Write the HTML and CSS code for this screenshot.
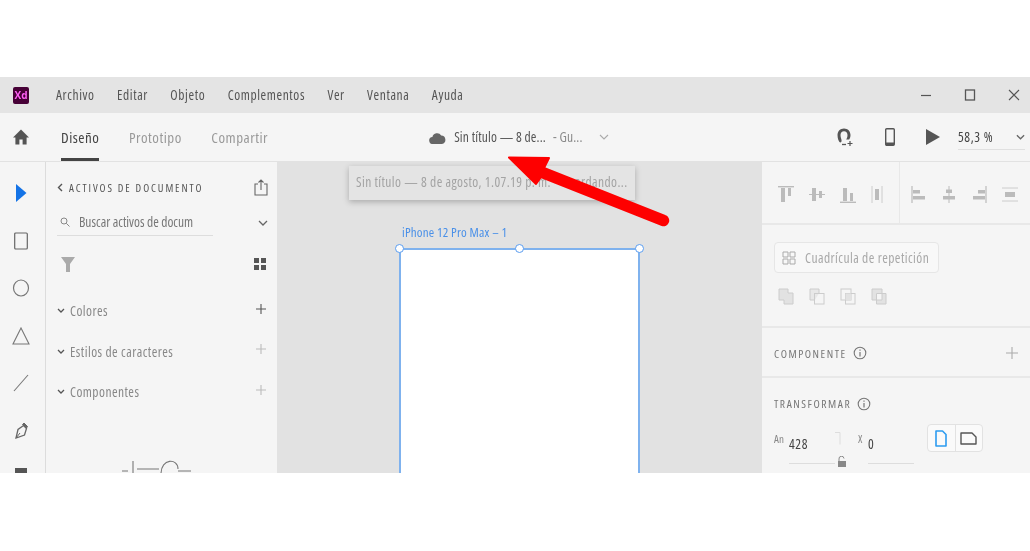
FILE: index.html
```html
<!DOCTYPE html>
<html lang="es">
<head>
<meta charset="utf-8">
<title>Adobe XD</title>
<link rel="stylesheet" href="styles.css">
</head>
<body>
<div class="app">
  <header class="titlebar">
    <div class="xd-logo">Xd</div>
    <nav class="menu">
      <span>Archivo</span><span>Editar</span><span>Objeto</span><span>Complementos</span><span>Ver</span><span>Ventana</span><span>Ayuda</span>
    </nav>
    <div class="win-controls">
      <svg width="14" height="14" viewBox="0 0 14 14"><path d="M2 7.500h10" stroke="#555" stroke-width="1.200"/></svg>
      <svg width="14" height="14" viewBox="0 0 14 14"><rect x="2.500" y="2" width="9" height="10" fill="none" stroke="#555" stroke-width="1.300"/></svg>
      <svg width="14" height="14" viewBox="0 0 14 14"><path d="M2 2l10 10M12 2L2 12" stroke="#555" stroke-width="1.100"/></svg>
    </div>
  </header>

  <div class="toolbar">
    <svg class="home" width="18" height="18" viewBox="0 0 18 18"><path d="M9 1.500L1 9.500h2.400V16.500h4V11.500h3.200v5h4V9.500H17z" fill="#555"/></svg>
    <div class="tabs">
      <span class="tab active">Diseño</span><span class="tab">Prototipo</span><span class="tab">Compartir</span>
    </div>
    <div class="doc-title">
      <svg width="17" height="13" viewBox="0 0 17 13"><path d="M4 13a3.500 3.500 0 0 1-.6-7A4.800 4.800 0 0 1 12.200 4.500 4.300 4.300 0 0 1 13 13z" fill="#666"/></svg>
      <span class="doc-name">Sin título — 8 de...</span>
      <span class="doc-state">- Gu...</span>
      <svg width="10" height="6" viewBox="0 0 10 6"><path d="M1 1l4 4 4-4" fill="none" stroke="#aaa" stroke-width="1.100"/></svg>
    </div>
    <div class="tool-actions">
      <svg width="18" height="20" viewBox="0 0 18 20"><path d="M8 4.200c-2.100 0-3.500 1.500-3.500 3.800 0 2.600 1.100 4.200 1.100 5.800 0 1.400-.9 1.800-1.500 1.700C2.700 14.500 1.500 11.500 1.500 8 1.500 4.300 4.200 1.500 8 1.500S14.500 4.300 14.500 8c0 1.800-.5 3.300-1.300 4.500h-3c.8-1.300 1.300-2.700 1.300-4.500 0-2.300-1.400-3.800-3.500-3.800z" fill="#555"/><path d="M6 17.500h4" stroke="#555" stroke-width="1.300"/><path d="M11.500 16.500h5M14 14v5" stroke="#555" stroke-width="1.200"/></svg>
      <svg width="12" height="20" viewBox="0 0 12 20"><rect x="1.700" y="1.700" width="8.600" height="16.600" rx="1" fill="none" stroke="#555" stroke-width="1.400"/><path d="M2 15.500h8v2.500H2z" fill="#555"/></svg>
      <svg width="14" height="16" viewBox="0 0 14 16"><path d="M0 0l14 8-14 8z" fill="#555"/></svg>
      <div class="zoom-field"><span>58,3 %</span>
        <svg width="9" height="6" viewBox="0 0 10 6"><path d="M1 1l4 4 4-4" fill="none" stroke="#666" stroke-width="1.400"/></svg>
      </div>
    </div>
  </div>

  <div class="workspace">
    <aside class="tool-rail">
      <svg width="14" height="18" viewBox="0 0 14 18"><path d="M2 0l10.500 9L2 18z" fill="#1473e6"/></svg>
      <svg width="14" height="18" viewBox="0 0 14 18"><rect x=".7" y="1" width="12.600" height="16" rx="1" fill="none" stroke="#666" stroke-width="1.200"/></svg>
      <svg width="18" height="18" viewBox="0 0 18 18"><ellipse cx="9" cy="9" rx="7.500" ry="8" fill="none" stroke="#777" stroke-width="1.200"/></svg>
      <svg width="18" height="18" viewBox="0 0 18 18"><path d="M9 1l8 16H1z" fill="none" stroke="#777" stroke-width="1.100"/></svg>
      <svg width="16" height="18" viewBox="0 0 16 18"><path d="M15 1L1 17" stroke="#777" stroke-width="1.100"/></svg>
      <svg width="16" height="18" viewBox="0 0 16 18"><path d="M10.500 3.500l3 3-2 6.500-8.500 3 2-8.500z" fill="none" stroke="#666" stroke-width="1.300"/><path d="M11 1l3.500 3.500-1 1.500L9.500 2.500zM3 16l4-5" fill="#666" stroke="#666"/></svg>
      <svg class="rail-cut" width="12" height="6" viewBox="0 0 12 6"><rect width="12" height="6" fill="#555"/></svg>
    </aside>

    <section class="assets">
      <div class="assets-head">
        <h2><svg width="6" height="9" viewBox="0 0 6 9"><path d="M5 1L1.500 4.500 5 8" fill="none" stroke="#555" stroke-width="1.400"/></svg>ACTIVOS DE DOCUMENTO</h2>
        <svg width="14" height="17" viewBox="0 0 14 17"><path d="M4 5H1v11h12V5h-3M7 11V1M4.500 3.500L7 1l2.500 2.500" fill="none" stroke="#666" stroke-width="1.100"/></svg>
      </div>
      <div class="assets-search">
        <div class="search-field">
          <svg width="10" height="10" viewBox="0 0 10 10"><circle cx="4" cy="4" r="3" fill="none" stroke="#888"/><path d="M6.300 6.300L9.500 9.500" stroke="#888"/></svg>
          <span>Buscar activos de docum</span>
        </div>
        <svg width="10" height="6" viewBox="0 0 10 6"><path d="M1 1l4 4 4-4" fill="none" stroke="#666" stroke-width="1.300"/></svg>
      </div>
      <div class="assets-filter">
        <svg width="14" height="15" viewBox="0 0 14 15"><path d="M0 0h14L9 7v8H5V7z" fill="#aaa"/></svg>
        <svg width="12" height="12" viewBox="0 0 12 12"><path d="M0 0h5v5H0zM7 0h5v5H7zM0 7h5v5H0zM7 7h5v5H7z" fill="#555"/></svg>
      </div>
      <div class="asset-row">
        <span><svg width="8" height="6" viewBox="0 0 8 6"><path d="M1 1l3 3 3-3" fill="none" stroke="#555" stroke-width="1.300"/></svg>Colores</span>
        <svg class="plus" width="12" height="12" viewBox="0 0 12 12"><path d="M6 1v10M1 6h10" stroke="#555" stroke-width="1.100"/></svg>
      </div>
      <div class="asset-row">
        <span><svg width="8" height="6" viewBox="0 0 8 6"><path d="M1 1l3 3 3-3" fill="none" stroke="#555" stroke-width="1.300"/></svg>Estilos de caracteres</span>
        <svg class="plus" width="12" height="12" viewBox="0 0 12 12"><path d="M6 1v10M1 6h10" stroke="#bbb" stroke-width="1.100"/></svg>
      </div>
      <div class="asset-row">
        <span><svg width="8" height="6" viewBox="0 0 8 6"><path d="M1 1l3 3 3-3" fill="none" stroke="#555" stroke-width="1.300"/></svg>Componentes</span>
        <svg class="plus" width="12" height="12" viewBox="0 0 12 12"><path d="M6 1v10M1 6h10" stroke="#bbb" stroke-width="1.100"/></svg>
      </div>
      <svg class="assets-art" width="70" height="14" viewBox="0 0 70 14"><path d="M0 11h6M11 1v13M15 9h22M56 9c0-11-17-11-17 5M56 11h13" fill="none" stroke="#777" stroke-width="1.100"/></svg>
    </section>

    <main class="canvas">
      <div class="save-tip">Sin título — 8 de agosto, 1.07.19 p. m. - Guardando...</div>
      <div class="artboard-label">iPhone 12 Pro Max – 1</div>
      <div class="artboard">
        <i class="handle h-left"></i><i class="handle h-mid"></i><i class="handle h-right"></i>
      </div>
    </main>

    <aside class="props">
      <div class="align-row">
        <div class="align-group">
          <svg width="16" height="17" viewBox="0 0 16 17"><path d="M0 .7h16" stroke="#bbb" stroke-width="1.400"/><path d="M3 2h4v14H3zM10 2h3v8h-3z" fill="#bbb"/></svg>
          <svg width="16" height="17" viewBox="0 0 16 17"><path d="M0 8.500h16" stroke="#bbb"/><path d="M3 2h4v13H3zM10 5h3v7h-3z" fill="#bbb"/></svg>
          <svg width="16" height="17" viewBox="0 0 16 17"><path d="M0 16.300h16" stroke="#bbb" stroke-width="1.400"/><path d="M3 2h4v13H3zM10 7h3v8h-3z" fill="#bbb"/></svg>
          <svg width="12" height="17" viewBox="0 0 12 17"><path d="M1 0v17M11 0v17" stroke="#ccc"/><path d="M4 3h4v11H4z" fill="#bbb"/></svg>
        </div>
        <div class="align-group">
          <svg width="16" height="17" viewBox="0 0 16 17"><path d="M1 0v17" stroke="#bbb" stroke-width="1.200"/><path d="M2 4h7v3.500H2zM2 10h12v3.500H2z" fill="#bbb"/></svg>
          <svg width="14" height="17" viewBox="0 0 14 17"><path d="M7 0v17" stroke="#bbb"/><path d="M4 3.500h6V7H4zM1 10h12v3.500H1z" fill="#bbb"/></svg>
          <svg width="16" height="17" viewBox="0 0 16 17"><path d="M15 0v17" stroke="#bbb" stroke-width="1.200"/><path d="M7 4h7v3.500H7zM2 10h12v3.500H2z" fill="#bbb"/></svg>
          <svg width="16" height="17" viewBox="0 0 16 17"><path d="M0 2h16M0 15h16" stroke="#ccc"/><path d="M3 6h10v5H3z" fill="#bbb"/></svg>
        </div>
      </div>

      <div class="repeat-block">
        <div class="repeat-btn">
          <svg width="14" height="14" viewBox="0 0 14 14"><path d="M1 1h5v5H1zM8 1h5v5H8zM1 8h5v5H1zM8 8h5v5H8z" fill="none" stroke="#aaa"/></svg>
          <span>Cuadrícula de repetición</span>
        </div>
        <div class="bool-icons">
          <svg width="16" height="17" viewBox="0 0 16 17"><path d="M1 1h9v4h5v11H6v-4H1z" fill="#e2e2e2" stroke="#ccc"/></svg>
          <svg width="16" height="17" viewBox="0 0 16 17"><path d="M6 12H1V1h9v4" fill="#e8e8e8" stroke="#ccc"/><rect x="5.500" y="5.500" width="9.500" height="10.500" fill="none" stroke="#ccc"/></svg>
          <svg width="16" height="17" viewBox="0 0 16 17"><rect x="1" y="1" width="10" height="11" fill="none" stroke="#ccc"/><rect x="5.500" y="5.500" width="9.500" height="10.500" fill="none" stroke="#ccc"/><rect x="5.500" y="5.500" width="5.500" height="6.500" fill="#e2e2e2"/></svg>
          <svg width="16" height="17" viewBox="0 0 16 17"><path d="M1 1h10v4.500H5.500V12H1zM11 5.500h4V16H5.500v-4H11z" fill="#e2e2e2" stroke="#ccc"/></svg>
        </div>
      </div>

      <div class="prop-section component-row">
        <h3>COMPONENTE<svg class="info" width="14" height="14" viewBox="0 0 14 14"><circle cx="7" cy="7" r="5.800" fill="none" stroke="#777" stroke-width="1.100"/><path d="M7 6v4.500M7 3.500v1.300" stroke="#777" stroke-width="1.200"/></svg></h3>
        <svg width="12" height="12" viewBox="0 0 12 12"><path d="M6 0v12M0 6h12" stroke="#aaa" stroke-width="1.100"/></svg>
      </div>

      <div class="prop-section transform">
        <h3>TRANSFORMAR<svg class="info" width="14" height="14" viewBox="0 0 14 14"><circle cx="7" cy="7" r="5.800" fill="none" stroke="#777" stroke-width="1.100"/><path d="M7 6v4.500M7 3.500v1.300" stroke="#777" stroke-width="1.200"/></svg></h3>
        <div class="transform-row">
          <div class="field">
            <small>An</small><span class="value w-field">428</span>
          </div>
          <div class="link-col">
            <svg width="6" height="13" viewBox="0 0 6 13"><path d="M0 .5h5v12" fill="none" stroke="#ddd"/></svg>
            <svg class="lock" width="8" height="11" viewBox="0 0 8 11"><path d="M1 5V3a2.500 2.500 0 0 1 5-.5" fill="none" stroke="#888"/><rect y="5" width="8" height="6" fill="#888"/></svg>
          </div>
          <div class="field">
            <small>X</small><span class="value x-field">0</span>
          </div>
          <div class="orient">
            <span class="orient-btn"><svg width="12" height="17" viewBox="0 0 12 17"><path d="M1 1h6.500L11 4.500V16H1z" fill="none" stroke="#2d9cf0" stroke-width="1.600" stroke-linejoin="round"/></svg></span>
            <span class="orient-btn"><svg width="17" height="13" viewBox="0 0 17 13"><path d="M1 1h11l4 4v7H1z" fill="none" stroke="#555" stroke-width="1.400" stroke-linejoin="round"/></svg></span>
          </div>
        </div>
      </div>
    </aside>
  </div>
</div>

<svg class="arrow" width="180" height="80" viewBox="500 150 180 80">
  <path d="M509 157.500L549 158 544 168 665 216A4.500 4.500 0 0 1 662 225L541 177 536 184z" fill="#fe0000" stroke="#fe0000" stroke-width="2" stroke-linejoin="round"/>
</svg>
</body>
</html>
```

FILE: styles.css
```css
* { box-sizing: border-box; }
html, body { margin: 0; height: 100%; }
body {
  background: #fff; overflow: hidden; padding-top: 77px;
  font: 13.5px "Open Sans", sans-serif; color: #555;
  font-stretch: 75%; letter-spacing: .6px;
}
svg { display: block; flex: none; }

.app { height: 396px; display: flex; flex-direction: column; overflow: hidden; background: #f5f5f5; filter: blur(.4px); }

/* title bar */
.titlebar { height: 36px; background: #e4e4e4; display: flex; align-items: center; padding-left: 13px; }
.xd-logo {
  width: 16px; height: 17px; background: #470137; color: #ff61f6; border-radius: 2px;
  font: bold 10px/17px "Open Sans", sans-serif; text-align: center; margin-right: 27px; letter-spacing: 0;
}
.menu { display: flex; gap: 22.4px; }
.win-controls { margin-left: auto; display: flex; gap: 30px; padding-right: 9px; }

/* toolbar */
.toolbar { height: 49px; display: flex; align-items: center; padding-left: 12px; border-bottom: 1px solid #e2e2e2; position: relative; }
.tabs { display: flex; gap: 29.5px; margin-left: 31px; height: 100%; }
.tab { color: #999; font-size: 15px; line-height: 49px; height: 48px; letter-spacing: .5px; }
.tab.active { color: #444; border-bottom: 3px solid #444; }
.doc-title { display: flex; align-items: center; margin-left: 161px; letter-spacing: .15px; }
.doc-name { margin-left: 8px; color: #555; }
.doc-state { margin-left: 7px; color: #888; }
.doc-title svg:last-child { margin-left: 16px; }
.tool-actions { margin-left: auto; display: flex; align-items: center; gap: 30px; }
.zoom-field {
  width: 67px; height: 26px; margin-left: -12px; margin-right: 5px; display: flex; align-items: center; justify-content: space-between;
  border-bottom: 1px solid #e0e0e0; color: #444;
}

/* main area */
.workspace { flex: 1; display: flex; min-height: 0; }
.tool-rail {
  width: 46px; border-right: 1px solid #dcdcdc; display: flex; flex-direction: column; align-items: center;
  gap: 29.6px; padding-top: 22px; padding-right: 3px;
}
.rail-cut { margin-top: -2px; }

.assets { width: 231px; padding: 0 9px 0 11px; position: relative; }
.assets-head { height: 50px; display: flex; justify-content: space-between; align-items: center; }
.assets-head h2 {
  margin: 0; font-size: 11px; font-weight: 400; letter-spacing: 1.900px; color: #555; display: flex; gap: 6px; align-items: center;
}
.assets-search { display: flex; align-items: center; justify-content: space-between; height: 27px; margin-top: -3px; }
.search-field {
  width: 156px; height: 27px; display: flex; align-items: center; gap: 9px; padding-left: 3px;
  border-bottom: 1px solid #ddd; white-space: nowrap; color: #777; letter-spacing: 0;
}
.assets-filter { display: flex; justify-content: space-between; align-items: center; margin-top: 19px; padding-left: 4px; padding-right: 2px; height: 18px; }
.asset-row { display: flex; justify-content: space-between; align-items: center; height: 40.5px; color: #888; padding-right: 1px; letter-spacing: .45px; }
.assets-filter + .asset-row { margin-top: 18px; }
.asset-row span { display: flex; align-items: center; gap: 5px; }
.asset-row .plus { margin-top: -5px; }
.assets-art { position: absolute; left: 76px; top: 298px; }

.canvas { flex: 1; background: #e2e2e2; position: relative; }
.save-tip {
  position: absolute; left: 72px; top: 4px; width: 286px; height: 34px; line-height: 33px; padding-left: 7px;
  background: #e4e4e4; color: #a3a3a3; box-shadow: 0 2px 6px rgba(0,0,0,.25); white-space: nowrap; letter-spacing: .4px;
}
.artboard-label { position: absolute; left: 125px; top: 61px; color: #4a90e8; font-size: 13px; letter-spacing: .2px; }
.artboard { position: absolute; left: 122px; top: 86px; width: 241px; height: 300px; background: #fff; border: 2px solid #7fb2ee; border-bottom: 0; }
.handle { position: absolute; top: -6px; width: 9px; height: 9px; border-radius: 50%; background: #fff; border: 1.5px solid #5b9df0; }
.h-left { left: -6px; }
.h-mid { left: 114px; }
.h-right { right: -6px; }

/* right panel */
.props { width: 268px; display: flex; flex-direction: column; }
.align-row { height: 63px; display: flex; border-bottom: 2px solid #e8e8e8; }
.align-group { display: flex; align-items: center; gap: 15px; padding: 4px 12px 0 16px; }
.align-group:first-child { width: 138px; border-right: 1px solid #e8e8e8; }
.align-group:last-child { padding-left: 11px; }
.repeat-block { height: 103px; border-bottom: 2px solid #e8e8e8; padding: 17px 12px 0; }
.repeat-btn {
  width: 165px; height: 31px; border: 1px solid #e6e6e6; border-radius: 4px; display: flex; align-items: center;
  gap: 9px; padding-left: 7px; color: #a8a8a8; background: #f8f8f8; white-space: nowrap; letter-spacing: .45px;
}
.bool-icons { display: flex; gap: 15px; margin-top: 15px; padding-left: 4px; }
.prop-section h3 { margin: 0; font-size: 11.5px; font-weight: 400; letter-spacing: 1.550px; color: #777; display: flex; align-items: center; gap: 6px; }
.component-row { height: 50px; border-bottom: 2px solid #e8e8e8; display: flex; align-items: center; justify-content: space-between; padding: 2px 12px 0; }
.transform { padding: 18px 12px 0; }
.transform-row { display: flex; margin-top: 13px; }
.field { display: flex; align-items: flex-start; }
.field small { font-size: 11px; color: #888; margin-top: 7px; width: 15px; letter-spacing: .2px; }
.value { display: block; height: 37px; line-height: 30px; margin-top: 3px; border-bottom: 1px solid #ddd; padding-top: 2px; color: #444; }
.w-field { width: 46px; }
.x-field { width: 46px; margin-left: -5px; }
.link-col { width: 23px; position: relative; }
.link-col svg:first-child { margin-top: 8px; }
.lock { position: absolute; left: 3px; top: 32px; }
.orient { display: flex; width: 56px; height: 28px; margin-left: 13px; background: #fafafa; border: 1px solid #e2e2e2; border-radius: 4px; }
.orient-btn { flex: 1; display: flex; align-items: center; justify-content: center; }
.orient-btn:first-child { border-right: 1px solid #e2e2e2; }

.arrow { position: absolute; left: 500px; top: 150px; }
```
